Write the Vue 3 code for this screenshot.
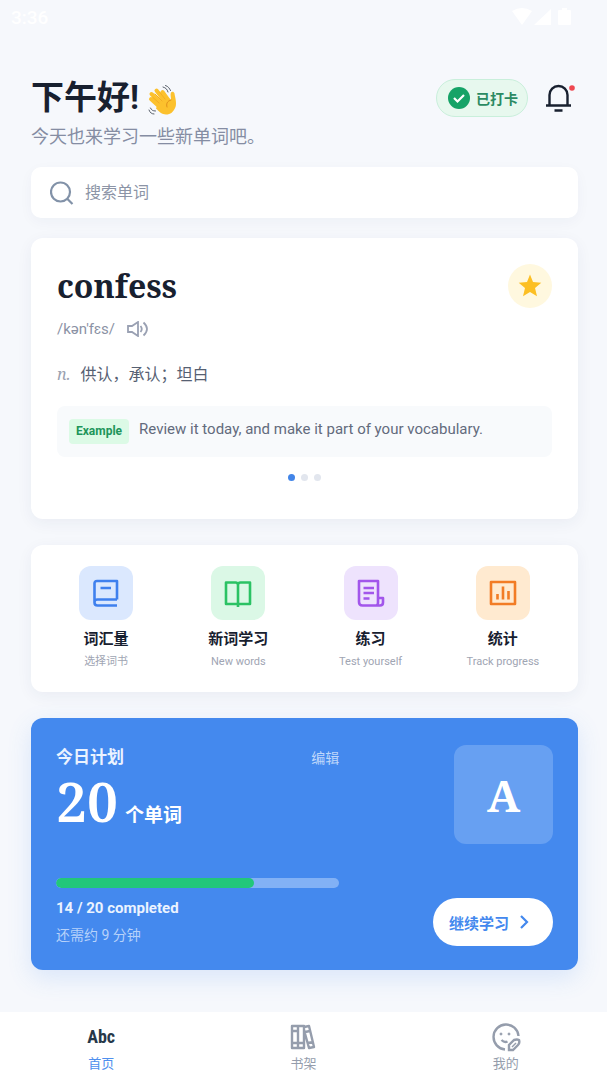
<script setup>
import { ref } from 'vue';

const keyword = ref('');
const done = ref(14);
const total = ref(20);

const actions = [
  { id: 'book', title: '词汇量', desc: '选择词书' },
  { id: 'learn', title: '新词学习', desc: 'New words' },
  { id: 'practice', title: '练习', desc: 'Test yourself' },
  { id: 'stats', title: '统计', desc: 'Track progress' },
];
</script>

<template>
  <div class="page">
    <div class="status-bar">
      <span>3:36</span>
      <div class="status-icons">
        <svg width="20" height="18" viewBox="0 0 20 18"><path d="M0 3Q10-3 20 3L10 17Z" /></svg>
        <svg width="18" height="18" viewBox="0 0 18 18"><path d="M17 1v16H0Z" /></svg>
        <svg class="battery" width="13" height="18" viewBox="0 0 13 18"><path d="M4 0h5v2h3q1 0 1 1v13q0 1-1 1H1q-1 0-1-1V3q0-1 1-1h3Z" /></svg>
      </div>
    </div>

    <main class="content">
      <header class="header">
        <div>
          <h1 class="greeting">
            下午好!
            <svg class="wave" width="30" height="32" viewBox="0 0 30 32" role="img" aria-label="👋" fill="none" stroke-linecap="round">
              <path d="M15 25 4 15M16 21 4.500 10M18 18 9.500 6.500M22 17l-6.500-9" stroke="#fcc12d" stroke-width="4" />
              <path d="M11 19 20 13l4 3c0-3-1-6 0-7.500s3-1 3.500 1C28 13 30 19 28.500 23c-2 5-5 7.500-9.500 7.500-4 0-7-3-10-6Z" fill="#fcc12d" />
              <path d="m6 13.500 6 5.500M8 10l7 7M12.500 8l5.500 7" stroke="#f4ad24" stroke-width="1" />
              <path d="M24 16c-4 1-5 4-4 7" stroke="#e08f1b" stroke-width="1" />
              <path d="M16 3c3 1 4 2 5 5M18.500 1.500c3 1 4 3 5 5M3.500 24c1 2 2 3 5 3M2 26c1 3 3 4 5 4" stroke="#59606b" stroke-width="1" />
            </svg>
          </h1>
          <p class="subtitle">今天也来学习一些新单词吧。</p>
        </div>
        <div class="header-tools">
          <button class="checkin" type="button">
            <svg width="22" height="22" viewBox="0 0 22 22">
              <circle cx="11" cy="11" r="11" fill="#16a367" />
              <path d="m6 11 3.500 3.500 6.500-6.500" fill="none" stroke="#fff" stroke-width="2.200" />
            </svg>
            已打卡
          </button>
          <button class="bell" type="button" aria-label="通知">
            <svg width="30" height="30" viewBox="0 0 30 30">
              <path d="M0 22.500H25M3.500 22V12a9 9 0 0 1 18 0v10M8.500 27.500h8" fill="none" stroke="#18202f" stroke-width="2.400" />
              <circle cx="26" cy="5" r="2.800" fill="#ef4750" />
            </svg>
          </button>
        </div>
      </header>

      <label class="search">
        <svg width="24" height="24" viewBox="0 0 24 24" fill="none" stroke="#8292a8" stroke-width="2.200">
          <circle cx="10.500" cy="11" r="9.500" />
          <path d="m17 17.500 5.500 5.500" />
        </svg>
        <input v-model="keyword" type="text" placeholder="搜索单词" aria-label="搜索单词" />
      </label>

      <section class="card word-card">
        <div class="word-head">
          <h2 class="word">confess</h2>
          <button class="star" type="button" aria-label="收藏">
            <svg width="24" height="24" viewBox="0 0 24 24"><path d="m12 .5 3 7.600 8.300.6-6.300 5.400 2 8.100-7-4.300-7 4.300 2-8.100L.7 8.700l8.300-.6Z" fill="#fcbf24" /></svg>
          </button>
        </div>
        <div class="phonetic">
          <span>/kən'fɛs/</span>
          <button type="button" aria-label="发音">
            <svg width="22" height="16" viewBox="0 0 22 16" fill="none" stroke="#9aa1b3" stroke-width="1.800">
              <path d="M1 5h4l6-4v14l-6-4H1Z" />
              <path d="M13.500 5q2.500 3 0 6M16.500 1.500q7 6.500 0 13" />
            </svg>
          </button>
        </div>
        <p class="meaning"><i>n.</i>供认，承认；坦白</p>
        <div class="example">
          <span class="badge">Example</span>
          <span>Review it today, and make it part of your vocabulary.</span>
        </div>
        <div class="dots">
          <span class="active"></span><span></span><span></span>
        </div>
      </section>

      <nav class="card actions">
        <a v-for="item in actions" :key="item.id" href="#" class="action">
          <span class="action-icon" :class="item.id">
            <svg width="28" height="28" viewBox="0 0 28 28" fill="none" stroke="currentColor" stroke-width="2.600" stroke-linejoin="round">
              <template v-if="item.id === 'book'">
                <path d="M25 20.500V2H5Q2.500 2 2.500 4.500v19q0 3 3 3H25M2.500 23q0-2.500 3-2.500H25M8.500 9H19" />
              </template>
              <template v-else-if="item.id === 'learn'">
                <path d="M14 28.500V6q0-2.500-2.500-2.500H2v21.500h24V3.500h-9.500Q14 3.500 14 6" />
              </template>
              <template v-else-if="item.id === 'practice'">
                <path d="M21 19V2H2v21q0 3.500 3.500 3.500H23q3 0 3-3V19h-5v4.500q0 3-2 3M6.500 9H17M6.500 14H17M6.500 19.500h6" />
              </template>
              <template v-else>
                <path d="M2 3h24v22H2ZM8.500 15v5.500M14 7.500v13M19.500 12v8.500" />
              </template>
            </svg>
          </span>
          <strong>{{ item.title }}</strong>
          <small>{{ item.desc }}</small>
        </a>
      </nav>

      <section class="plan">
        <div class="plan-main">
          <div class="plan-head">
            <h3>今日计划</h3>
            <button type="button">编辑</button>
          </div>
          <p class="goal"><b>{{ total }}</b>个单词</p>
          <div class="progress">
            <div class="progress-fill" :style="{ width: (done / total) * 100 + '%' }"></div>
          </div>
          <p class="completed">{{ done }} / {{ total }} completed</p>
          <p class="remain">还需约 9 分钟</p>
        </div>
        <div class="plan-side">
          <div class="cover">A</div>
          <button class="continue" type="button">
            继续学习
            <svg width="10" height="14" viewBox="0 0 10 14"><path d="m2 1 6 6-6 6" fill="none" stroke="#4388ee" stroke-width="2.200" /></svg>
          </button>
        </div>
      </section>
    </main>

    <nav class="tabbar">
      <a href="#" class="tab active">
        <span class="tab-icon abc">Abc</span>
        首页
      </a>
      <a href="#" class="tab">
        <span class="tab-icon">
          <svg width="26" height="26" viewBox="0 0 26 26" fill="none" stroke="currentColor" stroke-width="2.400" stroke-linejoin="round">
            <path d="M2 2h6v22H2ZM8 2h6v22H8ZM14 3l5-1 5 21-5 1L14 6M2 7h6M2 19h6M8 19h6M15 8l5-1M18 19l5-1" />
          </svg>
        </span>
        书架
      </a>
      <a href="#" class="tab">
        <span class="tab-icon">
          <svg width="30" height="30" viewBox="0 0 30 30" fill="none" stroke="currentColor" stroke-width="2.400">
            <path d="M14 27.500A12.500 12.500 0 1 1 27.500 14M10.500 18q3 3 6 1.500" />
            <path d="M18 28v-5l5-5q3-1 5 0 1 3-1 5l-5 5Z" />
            <path d="m21 25 4-4" stroke-width="1.500" />
            <circle cx="10" cy="12" r="1" stroke-width="1" fill="currentColor" />
            <circle cx="18" cy="12" r="1" stroke-width="1" fill="currentColor" />
          </svg>
        </span>
        我的
      </a>
    </nav>
  </div>
</template>

<style>
body {
  background: #f6f8fc;
}
</style>

<style scoped>
.page {
  display: flex;
  flex-direction: column;
  min-height: 100vh;
  font-family: Roboto, "Noto Sans CJK SC", sans-serif;
  color: #18202f;
}

h1, h2, h3, p {
  margin: 0;
}

button {
  padding: 0;
  border: none;
  background: none;
  font: inherit;
  color: inherit;
  cursor: pointer;
}

a {
  color: inherit;
  text-decoration: none;
}

svg {
  display: block;
  flex: none;
}

.status-bar {
  display: flex;
  justify-content: space-between;
  align-items: center;
  height: 34px;
  padding: 0 36px 0 11px;
  font-size: 19px;
  font-weight: 500;
  color: #fff;
}

.status-icons {
  display: flex;
  gap: 2px;
  fill: #fff;
}

.battery {
  margin-left: 4px;
}

.content {
  flex: 1;
  padding: 39px 29px 42px 31px;
}

.header {
  display: flex;
  justify-content: space-between;
  align-items: flex-start;
  margin-bottom: 17px;
}

.greeting {
  display: flex;
  align-items: center;
  gap: 8px;
  font-size: 33px;
  line-height: 50px;
}

.wave {
  margin-top: 4px;
}

.subtitle {
  font-size: 18px;
  line-height: 27px;
  color: #858da3;
}

.header-tools {
  display: flex;
  align-items: center;
  gap: 18px;
  padding: 6px 2px 0 0;
}

.checkin {
  display: flex;
  align-items: center;
  gap: 6px;
  height: 38px;
  padding: 0 9px 0 11px;
  border: 1px solid #c9efdb;
  border-radius: 19px;
  background: #e7f8ee;
  font-size: 14px;
  font-weight: 700;
  color: #2b8a62;
}

.search {
  display: flex;
  align-items: center;
  gap: 11px;
  height: 51px;
  padding: 0 19px;
  margin-bottom: 20px;
  border-radius: 10px;
  background: #fff;
  box-shadow: 0 4px 14px rgba(30, 50, 100, 0.04);
}

.search input {
  flex: 1;
  min-width: 0;
  padding: 0;
  border: none;
  outline: none;
  background: none;
  font: inherit;
  font-size: 16px;
}

.search input::placeholder {
  color: #8c94a6;
}

.card {
  margin-bottom: 26px;
  border-radius: 12px;
  background: #fff;
  box-shadow: 0 4px 16px rgba(30, 50, 100, 0.06);
}

.word-card {
  padding: 26px 26px 38px;
}

.word-head {
  display: flex;
  justify-content: space-between;
  align-items: center;
}

.word {
  font-family: "Noto Serif", "Liberation Serif", serif;
  font-size: 32px;
  line-height: 44px;
}

.star {
  display: grid;
  place-items: center;
  width: 44px;
  height: 44px;
  border-radius: 50%;
  background: #fff8df;
}

.phonetic {
  display: flex;
  align-items: center;
  gap: 12px;
  margin-top: 10px;
  font-size: 15px;
  line-height: 22px;
  color: #8b92a5;
}

.meaning {
  margin-top: 21px;
  font-size: 16px;
  line-height: 26px;
  color: #566072;
}

.meaning i {
  margin-right: 10px;
  font-family: "Noto Serif", "Liberation Serif", serif;
  color: #9aa1b0;
}

.example {
  display: flex;
  align-items: flex-start;
  gap: 10px;
  padding: 13px 12px;
  margin-top: 18px;
  border-radius: 8px;
  background: #f8fafc;
  font-size: 15px;
  line-height: 20px;
  color: #636b7c;
}

.badge {
  padding: 0 7px;
  border-radius: 4px;
  background: #dcfae6;
  font-size: 12px;
  font-weight: 700;
  line-height: 25px;
  color: #20955a;
}

.dots {
  display: flex;
  justify-content: center;
  gap: 6px;
  margin-top: 17px;
}

.dots span {
  width: 7px;
  height: 7px;
  border-radius: 50%;
  background: #e2e6ee;
}

.dots .active {
  background: #4285e8;
}

.actions {
  display: grid;
  grid-template-columns: repeat(4, 1fr);
  padding: 21px 9px 22px;
}

.action {
  display: flex;
  flex-direction: column;
  align-items: center;
}

.action-icon {
  display: grid;
  place-items: center;
  width: 54px;
  height: 54px;
  border-radius: 12px;
}

.action strong {
  margin-top: 7px;
  font-size: 15px;
  line-height: 24px;
}

.action small {
  margin-top: 2px;
  font-size: 11px;
  line-height: 17px;
  color: #a0a5b3;
}

.book {
  background: #dbe8fe;
  color: #3f80ee;
}

.learn {
  background: #dbf8e6;
  color: #2bc264;
}

.practice {
  background: #eee3fd;
  color: #a256eb;
}

.stats {
  background: #ffead0;
  color: #f27c25;
}

.plan {
  display: flex;
  justify-content: space-between;
  padding: 26px 25px 24px;
  border-radius: 12px;
  background: #4489ee;
  box-shadow: 0 8px 24px rgba(68, 137, 238, 0.16);
  color: #fff;
}

.plan-main {
  flex: 0 0 57%;
}

.plan-head {
  display: flex;
  justify-content: space-between;
  align-items: center;
}

.plan-head h3 {
  font-size: 17px;
  line-height: 26px;
  color: #ebf3ff;
}

.plan-head button {
  font-size: 14px;
  color: #bfd7fb;
}

.goal {
  display: flex;
  align-items: baseline;
  gap: 7px;
  font-size: 19px;
  font-weight: 700;
  line-height: 28px;
}

.goal b {
  font-family: "Noto Serif", "Liberation Serif", serif;
  font-size: 55px;
  font-weight: 600;
  line-height: 62px;
}

.progress {
  height: 10px;
  margin-top: 46px;
  border-radius: 5px;
  background: #82b1f5;
  overflow: hidden;
}

.progress-fill {
  height: 100%;
  border-radius: 5px;
  background: #22c77a;
}

.completed {
  margin-top: 8px;
  font-size: 15px;
  font-weight: 700;
  line-height: 24px;
  color: #ebf3ff;
}

.remain {
  margin-top: 4px;
  font-size: 14px;
  line-height: 22px;
  color: #b7d2fa;
}

.plan-side {
  display: flex;
  flex-direction: column;
  justify-content: space-between;
  align-items: flex-end;
}

.cover {
  display: grid;
  place-items: center;
  width: 99px;
  height: 99px;
  margin-top: 1px;
  border-radius: 12px;
  background: #67a0f2;
  font-family: "Noto Serif", "Liberation Serif", serif;
  font-size: 44px;
  font-weight: 700;
}

.continue {
  display: flex;
  align-items: center;
  gap: 10px;
  height: 48px;
  padding: 0 24px 0 16px;
  border-radius: 24px;
  background: #fff;
  font-size: 15px;
  font-weight: 700;
  color: #4388ee;
}

.tabbar {
  display: grid;
  grid-template-columns: repeat(3, 1fr);
  height: 68px;
  background: #fff;
}

.tab {
  display: flex;
  flex-direction: column;
  align-items: center;
  padding-top: 8px;
  font-size: 13px;
  line-height: 22px;
  color: #959dac;
}

.tab.active {
  color: #4f8fee;
}

.tab-icon {
  display: grid;
  place-items: center;
  height: 33px;
}

.abc {
  font-family: "Liberation Sans Narrow", "Roboto Condensed", Roboto, sans-serif;
  font-size: 18px;
  font-weight: 700;
  color: #26384a;
}
</style>
